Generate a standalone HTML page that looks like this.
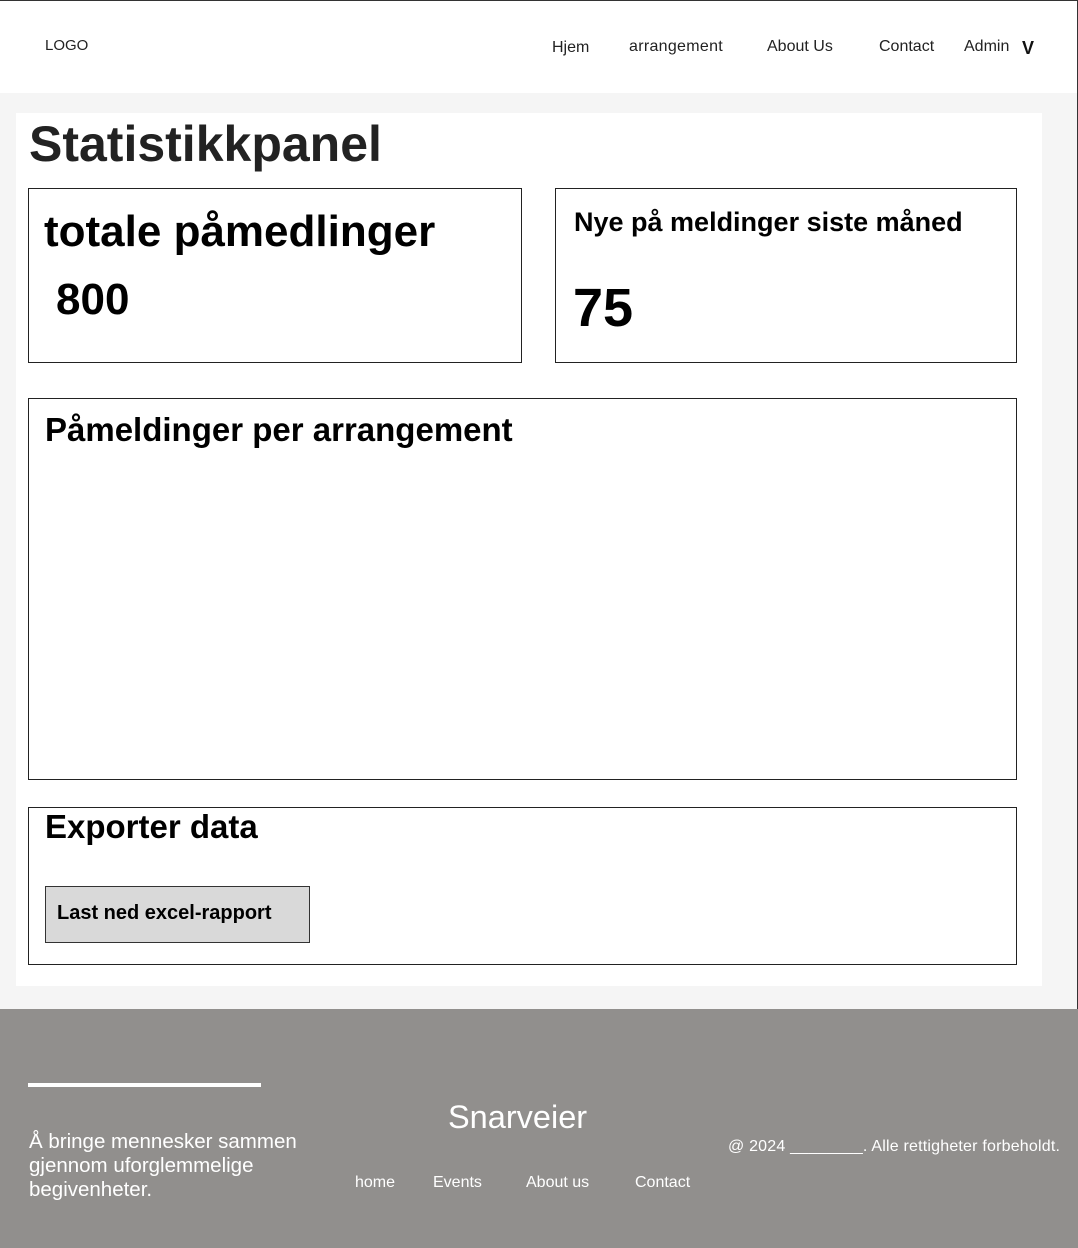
<!DOCTYPE html>
<html><head><meta charset="utf-8"><style>
*{margin:0;padding:0;box-sizing:border-box}
body{width:1078px;height:1248px;position:relative;background:#f5f5f5;font-family:"Liberation Sans",sans-serif;overflow:hidden}
.a{position:absolute}
.hdr{left:0;top:0;width:1078px;height:93px;background:#fff;border-top:1px solid #333}
.nav{font-size:16px;color:#222;top:37px}
.panel{left:16px;top:113px;width:1026px;height:873px;background:#fff}
.box{position:absolute;border:1.5px solid #222;background:#fff}
.ft{left:0;top:1009px;width:1078px;height:239px;background:#918f8d;color:#fff}
</style></head><body>
<div class="a hdr">
<div class="a" style="left:45px;top:36px;font-size:15px;color:#222">LOGO</div>
<div class="a nav" style="left:552px;top:38px">Hjem</div>
<div class="a nav" style="left:629px;letter-spacing:0.3px">arrangement</div>
<div class="a nav" style="left:767px">About Us</div>
<div class="a nav" style="left:879px">Contact</div>
<div class="a nav" style="left:964px">Admin</div>
<div class="a" style="left:1022px;top:37px;font-size:18px;color:#111;font-weight:700">V</div>
</div>
<div class="a" style="right:0;top:0;width:1px;height:1009px;background:#333"></div>
<div class="a panel"></div>
<div class="a" style="left:29px;top:115px;font-size:50px;font-weight:700;color:#222">Statistikkpanel</div>
<div class="box" style="left:28px;top:188px;width:494px;height:175px">
<div class="a" style="left:15px;top:18px;font-size:44px;font-weight:700">totale påmedlinger</div>
<div class="a" style="left:27px;top:86px;font-size:44px;font-weight:700">800</div>
</div>
<div class="box" style="left:555px;top:188px;width:462px;height:175px">
<div class="a" style="left:18px;top:18px;font-size:27px;font-weight:700">Nye på meldinger siste måned</div>
<div class="a" style="left:17px;top:88px;font-size:54px;font-weight:700">75</div>
</div>
<div class="box" style="left:28px;top:398px;width:989px;height:382px">
<div class="a" style="left:16px;top:12px;font-size:33px;font-weight:700">Påmeldinger per arrangement</div>
</div>
<div class="box" style="left:28px;top:807px;width:989px;height:158px">
<div class="a" style="left:16px;top:0px;font-size:33px;font-weight:700">Exporter data</div>
<div class="a" style="left:16px;top:78px;width:265px;height:57px;background:#d9d9d9;border:1.5px solid #333;font-size:20px;font-weight:700;padding:15px 11px;white-space:nowrap">Last ned excel-rapport</div>
</div>
<div class="a ft">
<div class="a" style="left:28px;top:74px;width:233px;height:4px;background:#fff"></div>
<div class="a" style="left:29px;top:121px;font-size:20.5px;line-height:24px;width:300px">Å bringe mennesker sammen gjennom uforglemmelige begivenheter.</div>
<div class="a" style="left:448px;top:90px;font-size:32.5px">Snarveier</div>
<div class="a" style="left:355px;top:165px;font-size:16px">home</div>
<div class="a" style="left:433px;top:165px;font-size:16px">Events</div>
<div class="a" style="left:526px;top:165px;font-size:16px">About us</div>
<div class="a" style="left:635px;top:165px;font-size:16px">Contact</div>
<div class="a" style="left:728px;top:129px;font-size:16px;white-space:nowrap;letter-spacing:0.2px">@ 2024 ________. Alle rettigheter forbeholdt.</div>
</div>
</body></html>
